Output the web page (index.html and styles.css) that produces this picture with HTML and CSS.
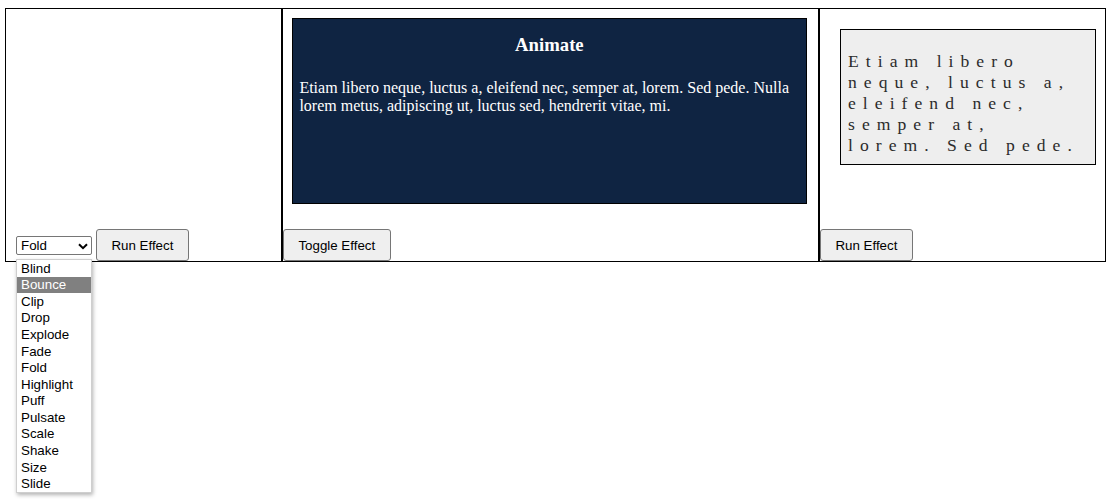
FILE: index.html
```html
<!DOCTYPE html>
<html>
<head>
<meta charset="utf-8">
<title>Effects</title>
<link rel="stylesheet" href="styles.css">
</head>
<body>
<div class="row">
  <div class="cell cell-effects">
    <div class="controls">
      <span class="select-wrap">
        <select class="effect-select">
          <option>Blind</option>
          <option>Bounce</option>
          <option>Clip</option>
          <option>Drop</option>
          <option>Explode</option>
          <option>Fade</option>
          <option selected>Fold</option>
          <option>Highlight</option>
          <option>Puff</option>
          <option>Pulsate</option>
          <option>Scale</option>
          <option>Shake</option>
          <option>Size</option>
          <option>Slide</option>
        </select>
        <svg class="chevron" width="10" height="7" viewBox="0 0 10 7" aria-hidden="true"><path d="M1 1.2 L5 5.2 L9 1.2" fill="none" stroke="#000" stroke-width="2"/></svg>
      </span>
      <button class="btn">Run Effect</button>
    </div>
    <ul class="listbox">
      <li>Blind</li>
      <li class="active">Bounce</li>
      <li>Clip</li>
      <li>Drop</li>
      <li>Explode</li>
      <li>Fade</li>
      <li>Fold</li>
      <li>Highlight</li>
      <li>Puff</li>
      <li>Pulsate</li>
      <li>Scale</li>
      <li>Shake</li>
      <li>Size</li>
      <li>Slide</li>
    </ul>
  </div>
  <div class="cell cell-animate">
    <div class="animate-box">
      <h3 class="animate-title">Animate</h3>
      <p class="animate-text">Etiam libero neque, luctus a, eleifend nec, semper at, lorem. Sed pede. Nulla lorem metus, adipiscing ut, luctus sed, hendrerit vitae, mi.</p>
    </div>
    <button class="btn">Toggle Effect</button>
  </div>
  <div class="cell cell-class">
    <div class="class-box">Etiam libero neque, luctus a, eleifend nec, semper at, lorem. Sed pede.</div>
    <button class="btn">Run Effect</button>
  </div>
</div>
</body>
</html>
```
FILE: styles.css
```css
html, body {
  background: #fff;
}
html {
  height: 100%;
}
body {
  box-sizing: border-box;
  min-height: 100%;
  margin: 0;
  padding: 8px 0 0 5px;
  font-family: "Liberation Serif", "Times New Roman", serif;
  font-size: 16px;
  color: #000;
}
.row {
  display: flex;
  align-items: stretch;
}
.cell {
  flex: none;
  box-sizing: border-box;
  height: 254px;
  border: 1px solid #000;
  display: flex;
  flex-direction: column;
  justify-content: space-between;
  align-items: flex-start;
  position: relative;
}
.cell-effects {
  width: 277px;
  justify-content: flex-end;
}
.cell-animate {
  width: 537px;
}
.cell-class {
  width: 287px;
}
.controls {
  display: flex;
  align-items: center;
  gap: 4px;
  padding-left: 10px;
}
.select-wrap {
  position: relative;
  display: block;
  width: 76px;
  height: 19px;
}
.effect-select {
  -webkit-appearance: none;
  appearance: none;
  display: block;
  box-sizing: border-box;
  width: 76px;
  height: 19px;
  margin: 0;
  padding: 0 0 0 4px;
  font-family: "Liberation Sans", Arial, sans-serif;
  font-size: 13.333px;
  line-height: 17px;
  color: #000;
  background: #fff;
  border: 1px solid #767676;
  border-radius: 2px;
}
.chevron {
  position: absolute;
  top: 7px;
  left: 62px;
  pointer-events: none;
}
.btn {
  margin: 0;
  padding: 8px 14.4px 6px;
  font-family: "Liberation Sans", Arial, sans-serif;
  font-size: 13.333px;
  line-height: 16px;
  color: #000;
  background: #efefef;
  border: 1px solid #767676;
  border-radius: 3px;
}
.listbox {
  position: absolute;
  top: 250px;
  left: 10px;
  z-index: 2;
  box-sizing: border-box;
  width: 76px;
  height: 234px;
  margin: 0;
  padding: 0;
  list-style: none;
  background: #fff;
  border: 1px solid #cfcfcf;
  box-shadow: 1px 2px 4px rgba(0, 0, 0, 0.3);
  display: grid;
  grid-template-rows: repeat(14, 1fr);
  font-family: "Liberation Sans", Arial, sans-serif;
  font-size: 13.333px;
  color: #000;
}
.listbox li {
  padding-left: 4px;
  display: flex;
  align-items: center;
}
.listbox li.active {
  background: #808080;
  color: #fff;
}
.animate-box {
  width: 500px;
  height: 171px;
  padding: 0.4em;
  margin: 9px 0 0 9px;
  background: #0f2442;
  border: 1px solid #000;
  color: #fff;
}
.animate-title {
  margin: 0;
  padding: 8.5px 7.5px 7.5px;
  line-height: 22px;
  text-align: center;
  font-size: 18.72px;
  font-weight: bold;
}
.animate-text {
  margin: 16px 0 0;
  font-size: 16px;
  line-height: 18px;
}
.class-box {
  box-sizing: border-box;
  width: 256px;
  height: 136px;
  margin: 20px 0 0 20px;
  padding: 21px 11px 0 7px;
  background: #eeeeee;
  border: 1px solid #000;
  color: #2b2b2b;
  font-size: 17.6px;
  line-height: 21px;
  letter-spacing: 0.4em;
}
```
